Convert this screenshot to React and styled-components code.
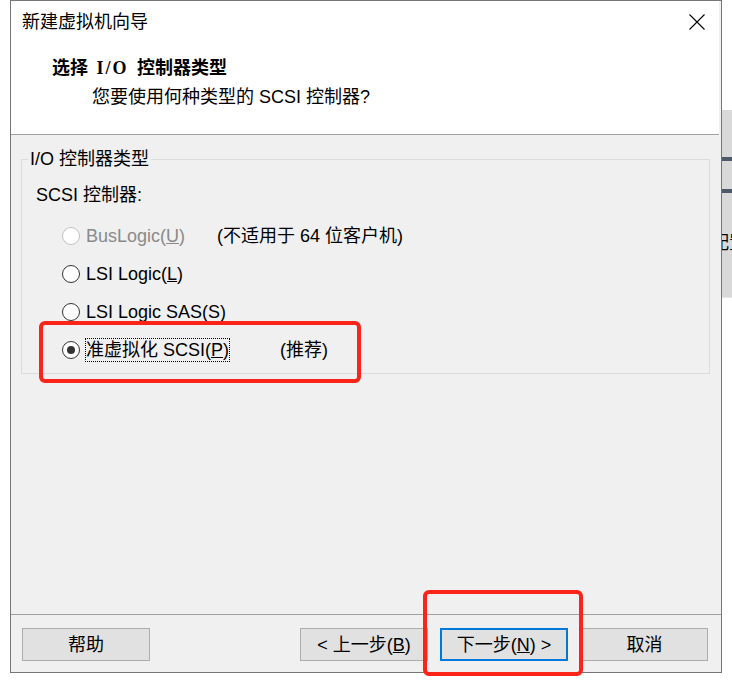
import React from "react";
import styled, { createGlobalStyle, css } from "styled-components";

const FONT = `"Liberation Sans", "Noto Sans CJK SC", sans-serif`;

const GlobalStyle = createGlobalStyle`
  html, body {
    margin: 0;
    padding: 0;
    background: #fff;
  }
  body {
    font-family: ${FONT};
    font-size: 18px;
    color: #000;
  }
`;

const Desktop = styled.div`
  position: relative;
  width: 732px;
  height: 683px;
  overflow: hidden;
  background: #fff;
`;

/* window partly hidden behind the wizard */
const BackWindow = styled.div`
  position: absolute;
  left: 700px;
  top: 110px;
  width: 60px;
  height: 187px;
  background: #d9d9d9;
  border-bottom: 1px solid #e6e6e6;
  display: flex;
  flex-direction: column;
`;

const Band = styled.div`
  height: 4px;
  margin-top: ${(p) => p.$top}px;
  background: #4b5a66;
`;

const BackText = styled.span`
  margin-top: 36px;
  padding-left: 11px;
  line-height: 24px;
  font-family: "Noto Sans CJK SC", sans-serif;
  font-size: 18px;
  white-space: nowrap;
`;

const Dialog = styled.div`
  position: relative;
  z-index: 1;
  margin-left: 10px;
  width: 710px;
  height: 671px;
  border: 1px solid #767676;
  background: #f0f0f0;
  display: flex;
  flex-direction: column;
`;

const Header = styled.div`
  height: 133px;
  background: #fff;
  border-bottom: 1px solid #a0a0a0;
  margin-right: 2px;
  display: flex;
  flex-direction: column;
`;

const TitleRow = styled.div`
  height: 42px;
  display: flex;
  align-items: center;
  justify-content: space-between;
  padding: 0 14px 0 11px;
`;

const Title = styled.span`
  line-height: 24px;
`;

const Heading = styled.div`
  margin-top: 13px;
  padding-left: 41px;
  line-height: 24px;
  font-size: 18px;
  font-weight: bold;
  word-spacing: 4px;
  font-family: "Liberation Serif", "Noto Sans CJK SC", serif;
`;

const Wide = styled.span`
  letter-spacing: 2px;
`;

const Subtitle = styled.div`
  margin-top: 5px;
  padding-left: 81px;
  line-height: 24px;
`;

const Body = styled.div`
  flex: 1;
  padding: 12px 11px 0 10px;
`;

const Group = styled.fieldset`
  margin: 0;
  padding: 0 0 4px 0;
  min-width: 0;
  width: 689px;
  box-sizing: border-box;
  border: 1px solid #dcdcdc;
`;

const Legend = styled.legend`
  margin-left: 6px;
  padding: 0 2px;
  line-height: 24px;
`;

const SubLabel = styled.div`
  margin-top: 12px;
  padding-left: 14px;
  line-height: 24px;
`;

const Options = styled.div`
  margin-top: 10px;
  padding-left: 40px;
  display: flex;
  flex-direction: column;
`;

const Row = styled.div`
  height: 38px;
  display: flex;
  align-items: center;
  color: ${(p) => (p.$disabled ? "#8a8a8a" : "#000")};
`;

const Radio = styled.span`
  box-sizing: border-box;
  width: 18px;
  height: 18px;
  border-radius: 50%;
  border: 1px solid ${(p) => (p.$disabled ? "#c2c2c2" : "#333")};
  background: #fff;
  display: flex;
  align-items: center;
  justify-content: center;
  flex: none;
  &::after {
    content: "";
    width: 8px;
    height: 8px;
    border-radius: 50%;
    background: ${(p) => (p.$checked ? "#333" : "transparent")};
  }
`;

const Label = styled.span`
  margin-left: 5px;
  line-height: 22px;
  border: 1px dotted transparent;
  ${(p) =>
    p.$focused &&
    css`
      border-color: #000;
    `}
`;

const Note = styled.span`
  margin-left: ${(p) => p.$gap}px;
  line-height: 24px;
  color: #000;
`;

const Footer = styled.div`
  height: 58px;
  box-sizing: border-box;
  border-top: 1px solid #a0a0a0;
  padding: 13px 13px 0 11px;
  display: flex;
  align-items: flex-start;
`;

const Button = styled.button`
  box-sizing: border-box;
  width: ${(p) => p.$w || 128}px;
  height: 33px;
  margin: 0 0 0 ${(p) => p.$gap || 0}px;
  padding: 0;
  font-family: ${FONT};
  font-size: 18px;
  color: #000;
  background: #e1e1e1;
  border: ${(p) => (p.$default ? "2px solid #0078d7" : "1px solid #adadad")};
  display: flex;
  align-items: center;
  justify-content: center;
  line-height: 24px;
`;

const Spacer = styled.div`
  flex: 1;
`;

const Mark = styled.div`
  position: absolute;
  z-index: 2;
  left: ${(p) => p.$x}px;
  top: ${(p) => p.$y}px;
  width: ${(p) => p.$w}px;
  height: ${(p) => p.$h}px;
  box-sizing: border-box;
  border: 4px solid #fa2418;
  border-radius: 6px;
  pointer-events: none;
`;

const CloseIcon = () => (
  <svg width="16" height="16" viewBox="0 0 16 16">
    <path d="M0.5 0.5 L15.5 15.5 M15.5 0.5 L0.5 15.5" stroke="#000" strokeWidth="1.1" />
  </svg>
);

export default function App() {
  return (
    <>
      <GlobalStyle />
      <Desktop>
        <BackWindow>
          <Band $top={47} />
          <Band $top={28} />
          <BackText>配置</BackText>
        </BackWindow>
        <Dialog>
          <Header>
            <TitleRow>
              <Title>新建虚拟机向导</Title>
              <CloseIcon />
            </TitleRow>
            <Heading>
              选择 <Wide>I/O</Wide> 控制器类型
            </Heading>
            <Subtitle>您要使用何种类型的 SCSI 控制器?</Subtitle>
          </Header>
          <Body>
            <Group>
              <Legend>I/O 控制器类型</Legend>
              <SubLabel>SCSI 控制器:</SubLabel>
              <Options>
                <Row $disabled>
                  <Radio $disabled />
                  <Label>
                    BusLogic(<u>U</u>)
                  </Label>
                  <Note $gap={31}>(不适用于 64 位客户机)</Note>
                </Row>
                <Row>
                  <Radio />
                  <Label>
                    LSI Logic(<u>L</u>)
                  </Label>
                </Row>
                <Row>
                  <Radio />
                  <Label>LSI Logic SAS(S)</Label>
                </Row>
                <Row>
                  <Radio $checked />
                  <Label $focused>
                    准虚拟化 SCSI(<u>P</u>)
                  </Label>
                  <Note $gap={50}>(推荐)</Note>
                </Row>
              </Options>
            </Group>
          </Body>
          <Footer>
            <Button>帮助</Button>
            <Spacer />
            <Button>
              &lt; 上一步(<u>B</u>)
            </Button>
            <Button $gap={12} $default>
              下一步(<u>N</u>) &gt;
            </Button>
            <Button $gap={13} $w={127}>
              取消
            </Button>
          </Footer>
        </Dialog>
        <Mark $x={39} $y={321} $w={322} $h={62} />
        <Mark $x={423} $y={590} $w={160} $h={86} />
      </Desktop>
    </>
  );
}
